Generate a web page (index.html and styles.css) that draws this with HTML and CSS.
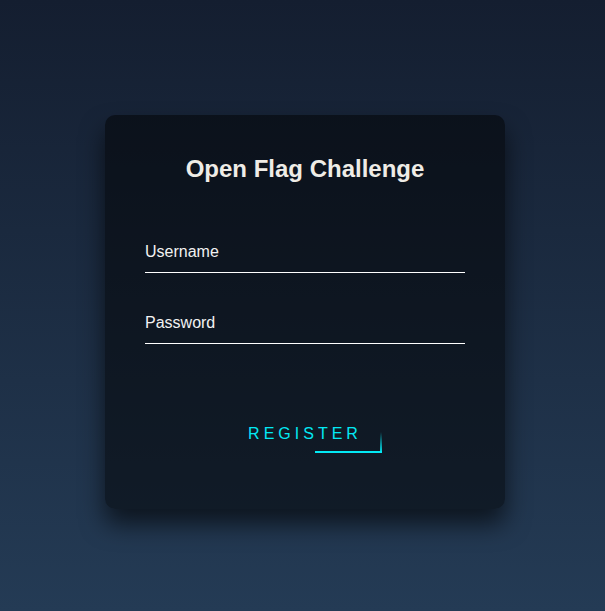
FILE: index.html
```html
<!DOCTYPE html>
<html lang="en">
<head>
<meta charset="utf-8">
<title>Open Flag Challenge</title>
<link rel="stylesheet" href="styles.css">
</head>
<body>
<main class="stage">
  <div class="login-box">
    <h2 class="title">Open Flag Challenge</h2>
    <form class="form">
      <div class="user-box">
        <input class="field" type="text" name="username" required>
        <label class="label">Username</label>
      </div>
      <div class="user-box">
        <input class="field" type="password" name="password" required>
        <label class="label">Password</label>
      </div>
      <div class="actions">
        <a class="btn" href="#">
          <span class="line line-bottom"></span>
          <span class="line line-right"></span>
          Register
        </a>
      </div>
    </form>
  </div>
</main>
</body>
</html>
```
FILE: styles.css
```css
html, body {
  margin: 0;
  padding: 0;
  height: 100%;
}
body {
  background: linear-gradient(#141e30, #243b55);
  font-family: "Liberation Sans", Arial, sans-serif;
}
.stage {
  display: flex;
  justify-content: center;
  padding: 115px 0 0 5px;
  box-sizing: border-box;
}
.login-box {
  width: 400px;
  height: 394px;
  box-sizing: border-box;
  padding: 40px 40px 0;
  background: rgba(0, 0, 0, 0.5);
  border-radius: 10px;
  box-shadow: 0 15px 25px rgba(0, 0, 0, 0.6);
}
.title {
  margin: 0;
  height: 28px;
  line-height: 28px;
  font-size: 24px;
  font-weight: bold;
  text-align: center;
  color: #efece6;
}
.form {
  margin-top: 51px;
}
.user-box {
  position: relative;
  margin-bottom: 32px;
}
.field {
  display: block;
  width: 100%;
  box-sizing: border-box;
  height: 39px;
  padding: 10px 0;
  font-size: 16px;
  font-family: inherit;
  color: #fff;
  border: none;
  border-bottom: 1px solid #fff;
  outline: none;
  background: transparent;
}
.label {
  position: absolute;
  top: -1px;
  left: 0;
  padding: 10px 0;
  line-height: 18px;
  font-size: 16px;
  color: #f2f2f2;
  pointer-events: none;
}
.actions {
  display: flex;
  justify-content: center;
  margin-top: 71px;
}
.btn {
  position: relative;
  display: inline-block;
  padding: 10px 20px;
  line-height: 18px;
  color: #03e9f4;
  font-size: 16px;
  text-decoration: none;
  text-transform: uppercase;
  letter-spacing: 4px;
  overflow: hidden;
}
.line {
  position: absolute;
  display: block;
}
.line-bottom {
  bottom: 0;
  right: 0;
  width: 67px;
  height: 2px;
  background: #03e9f4;
}
.line-right {
  right: 0;
  bottom: 0;
  width: 2px;
  height: 21px;
  background: linear-gradient(180deg, transparent, #03e9f4);
}
```
